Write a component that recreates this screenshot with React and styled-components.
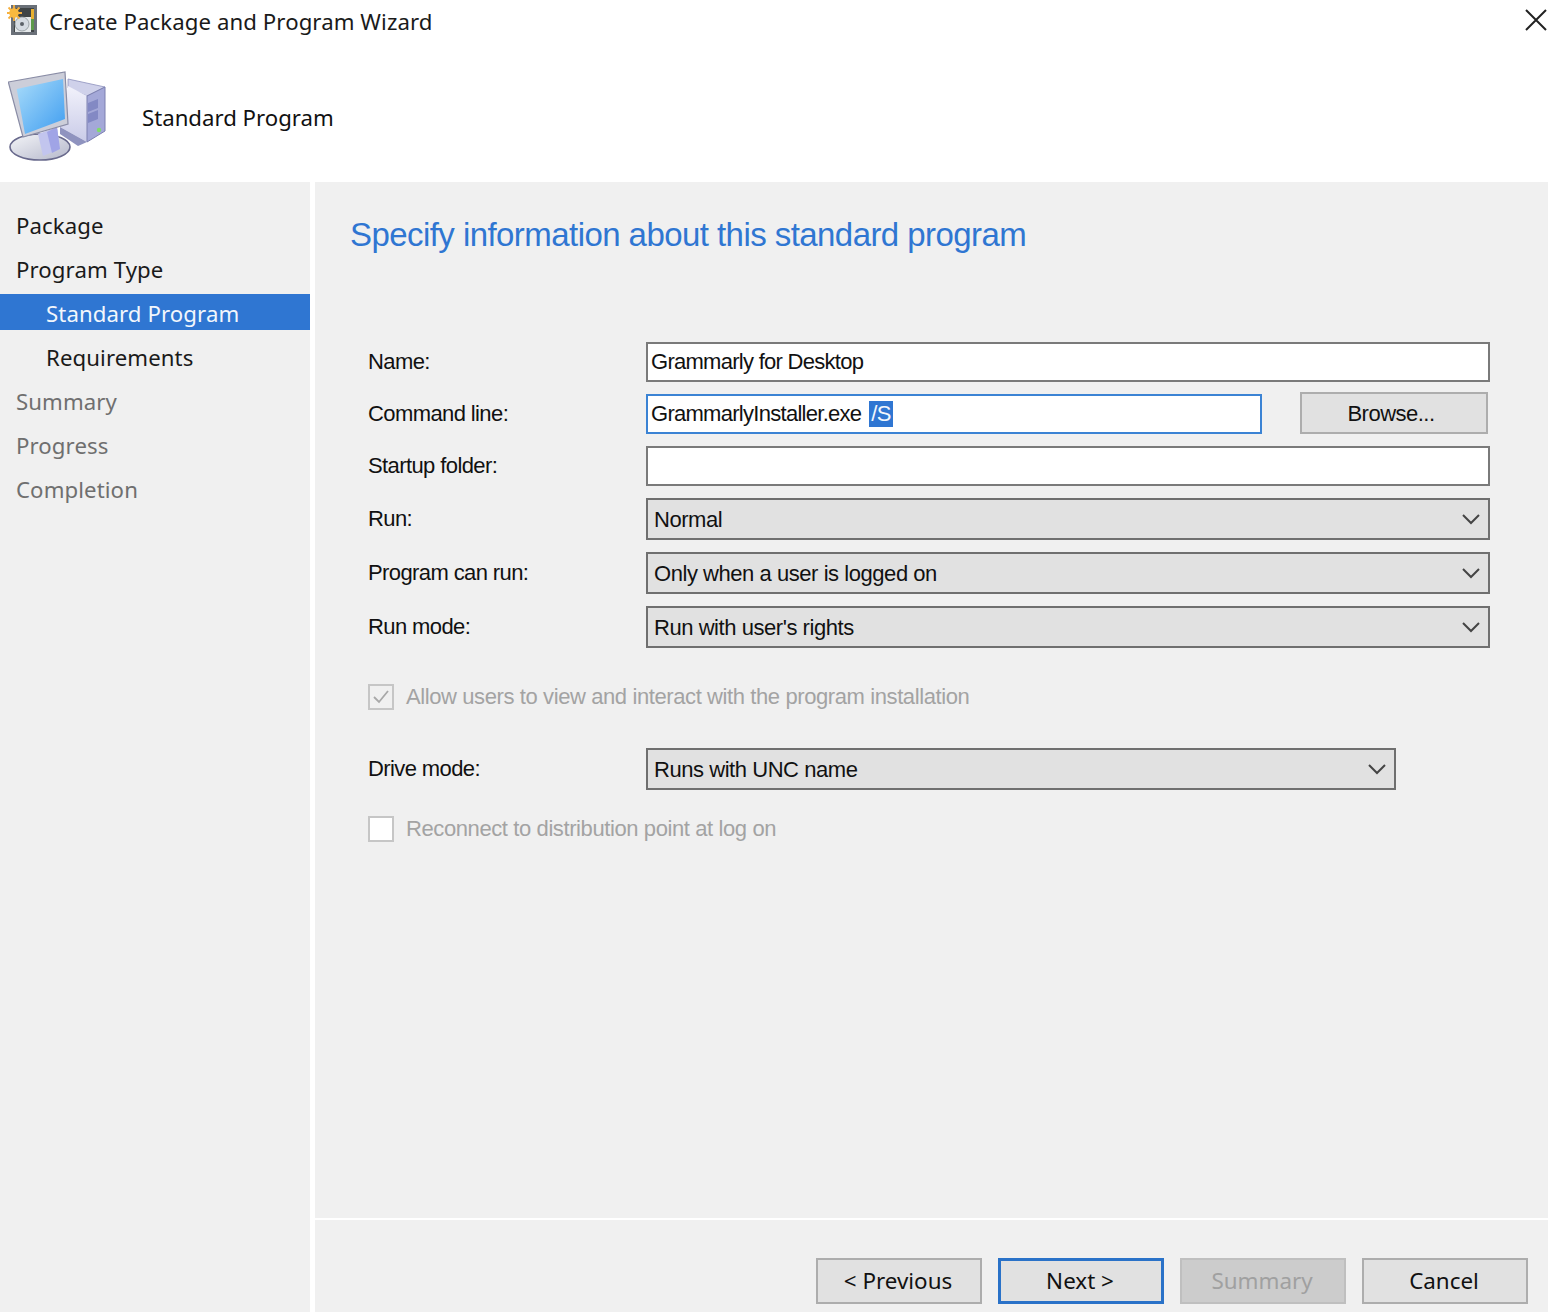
import React from "react";
import styled, { createGlobalStyle } from "styled-components";

const GlobalStyle = createGlobalStyle`
  html, body { margin: 0; padding: 0; background: #fff; }
  * { box-sizing: border-box; }
`;

const Wizard = styled.div`
  width: 1548px;
  height: 1312px;
  display: flex;
  flex-direction: column;
  background: #fff;
  overflow: hidden;
  font-family: "Noto Sans", sans-serif;
  color: #111;
`;

const TitleBar = styled.div`
  height: 44px;
  display: flex;
  align-items: center;
  padding: 0 0 0 7px;
  gap: 10px;
`;

const TitleText = styled.div`
  flex: 1;
  font-size: 22.2px;
  letter-spacing: 0.08px;
  margin-top: -1px;
  color: #1a1a1a;
`;

const Banner = styled.div`
  height: 138px;
  display: flex;
  align-items: center;
  padding: 9px 0 0 8px;
  gap: 32px;
  font-size: 22.2px;
`;

const Body = styled.div`
  flex: 1;
  display: flex;
  gap: 5px;
  min-height: 0;
`;

const Sidebar = styled.nav`
  width: 310px;
  background: #f0f0f0;
  padding-top: 24px;
  display: flex;
  flex-direction: column;
  gap: 8px;
`;

const NavItem = styled.div`
  height: 36px;
  display: flex;
  align-items: center;
  font-size: 22.2px;
  letter-spacing: 0.1px;
  padding: 2px 0 0 ${(p) => (p.$child ? "46px" : "16px")};
  background: ${(p) => (p.$active ? "#2f76d2" : "transparent")};
  color: ${(p) => (p.$active ? "#f2f6fc" : p.$muted ? "#6f6f6f" : "#1a1a1a")};
`;

const Main = styled.main`
  flex: 1;
  display: flex;
  flex-direction: column;
  background: #f0f0f0;
`;

const Content = styled.div`
  flex: 1;
  padding: 31px 58px 0 35px;
  font-family: "Liberation Sans", Arial, sans-serif;
`;

const Heading = styled.h1`
  margin: 0;
  height: 44px;
  line-height: 44px;
  font-weight: 400;
  font-size: 33px;
  letter-spacing: -0.56px;
  color: #2f76d2;
`;

const Form = styled.div`
  margin-top: 85px;
  padding-left: 18px;
  display: flex;
  flex-direction: column;
`;

const Row = styled.div`
  display: grid;
  grid-template-columns: 278px 1fr;
  align-items: center;
  margin-bottom: ${(p) => p.$gap ?? 12}px;
`;

const Label = styled.label`
  font-size: 22px;
  letter-spacing: -0.6px;
  color: #111;
`;

const FieldGroup = styled.div`
  height: 40px;
  display: flex;
  align-items: flex-end;
  justify-content: space-between;
  padding-right: 2px;
`;

const TextField = styled.div`
  height: 40px;
  width: ${(p) => p.$width || "100%"};
  display: flex;
  align-items: center;
  padding-left: 3px;
  background: #fff;
  border: 2px solid ${(p) => (p.$focused ? "#3b83d4" : "#7a7a7a")};
  font-size: 22px;
  letter-spacing: -0.72px;
  white-space: pre;
`;

const Selected = styled.span`
  background: #2f76d2;
  color: #f2f6fc;
  height: 26px;
  line-height: 26px;
  padding: 0 2px;
  margin-left: 8px;
`;

const Select = styled.div`
  height: 42px;
  width: ${(p) => p.$width || "100%"};
  display: flex;
  align-items: center;
  justify-content: space-between;
  padding: 2px 8px 0 6px;
  background: #e1e1e1;
  border: 2px solid #6f6f6f;
  font-size: 22px;
  letter-spacing: -0.45px;
`;

const Chevron = styled.svg`
  margin-top: -2px;
`;

const SelectArrow = () => (
  <Chevron width="18" height="12" viewBox="0 0 18 12">
    <path d="M1 2 L9 10 L17 2" fill="none" stroke="#444" strokeWidth="2" />
  </Chevron>
);

const CheckRow = styled.div`
  display: flex;
  align-items: center;
  gap: 12px;
  height: 26px;
  font-size: 22px;
  letter-spacing: -0.4px;
  color: #a3a3a3;
  margin-top: ${(p) => p.$top || 0}px;
  margin-bottom: ${(p) => p.$bottom || 0}px;
`;

const CheckBox = styled.span`
  width: 26px;
  height: 26px;
  display: flex;
  align-items: center;
  justify-content: center;
  border: 2px solid #c6c6c6;
  background: ${(p) => (p.$checked ? "#f0f0f0" : "#fff")};
`;

const Footer = styled.div`
  height: 94px;
  border-top: 2px solid #fff;
  display: flex;
  justify-content: flex-end;
  gap: 16px;
  padding: 38px 20px 0 0;
`;

const Button = styled.button`
  width: ${(p) => p.$width || 166}px;
  height: ${(p) => p.$height || 46}px;
  padding: ${(p) => (p.$plain ? "2px 6px 0 0" : "0 2px 2px 0")};
  background: ${(p) => (p.$disabled ? "#cccccc" : "#e1e1e1")};
  border: ${(p) => (p.$primary ? "3px solid #2a72c8" : `2px solid ${p.$disabled ? "#bfbfbf" : "#adadad"}`)};
  color: ${(p) => (p.$disabled ? "#a0a0a0" : "#111")};
  font-family: ${(p) => (p.$plain ? '"Liberation Sans", Arial' : '"Noto Sans"')}, sans-serif;
  font-size: ${(p) => (p.$plain ? 22 : 22.4)}px;
  letter-spacing: ${(p) => (p.$plain ? "-0.5px" : "0")};
`;

const SoftIcon = styled.svg`
  flex: none;
  filter: blur(0.6px);
`;

const CloseGlyph = styled.svg`
  margin-top: -4px;
`;

const CloseIcon = () => (
  <CloseGlyph width="24" height="24" viewBox="0 0 24 24">
    <path d="M2 2 L22 22 M22 2 L2 22" stroke="#222" strokeWidth="2" fill="none" />
  </CloseGlyph>
);

const WizardIcon = () => (
  <SoftIcon width="32" height="34" viewBox="0 0 32 34">
    <rect x="4" y="0" width="26" height="30" fill="#6a7078" />
    <rect x="7" y="3" width="20" height="24" fill="#3f4446" />
    <rect x="24" y="4" width="3" height="10" fill="#e8b030" />
    <rect x="24" y="14" width="3" height="11" fill="#5d9a4a" />
    <rect x="8" y="12" width="16" height="15" fill="#e4e8ea" />
    <circle cx="15" cy="19" r="7" fill="#d5dbe2" stroke="#8d9499" strokeWidth="0.8" />
    <circle cx="15" cy="19" r="2" fill="#5b6168" />
    <path d="M7 0 V16 M-1 8 H15 M1.5 2.5 L12.5 13.5 M12.5 2.5 L1.5 13.5" stroke="#f6b040" strokeWidth="1.8" />
    <circle cx="7" cy="8" r="4.8" fill="#f9b93f" />
  </SoftIcon>
);

const ComputerIcon = () => (
  <SoftIcon width="102" height="100" viewBox="0 0 102 100">
    <defs>
      <linearGradient id="screen" x1="0" y1="0" x2="1" y2="1">
        <stop offset="0" stopColor="#a9dcfa" />
        <stop offset="1" stopColor="#3f9df0" />
      </linearGradient>
      <linearGradient id="side" x1="0" y1="0" x2="0" y2="1">
        <stop offset="0" stopColor="#f2f2fb" />
        <stop offset="1" stopColor="#c9cbe8" />
      </linearGradient>
      <linearGradient id="foot" x1="0" y1="0" x2="1" y2="1">
        <stop offset="0" stopColor="#f4f5f8" />
        <stop offset="1" stopColor="#b4b7ca" />
      </linearGradient>
    </defs>
    <path d="M60 11 L97 19 L79 28 L60 20 Z" fill="#cfd1ea" stroke="#8d91bd" strokeWidth="0.8" />
    <path d="M60 18 L79 28 L79 74 L52 59 Z" fill="url(#side)" />
    <path d="M79 28 L97 19 L97 63 L79 74 Z" fill="#a4a8d8" stroke="#7c80b0" strokeWidth="1" />
    <path d="M70 78 L52 66 L52 59 L79 74 Z" fill="#8f93bf" />
    <path d="M80 35 L90 31 V40 L80 44 Z" fill="#8389c4" />
    <path d="M80 46 L90 42 V51 L80 55 Z" fill="#8389c4" />
    <circle cx="91" cy="62" r="2.2" fill="#7fdc6a" />
    <ellipse cx="32" cy="79" rx="30" ry="13" fill="url(#foot)" stroke="#68698c" strokeWidth="1.6" />
    <path d="M30 66 L49 59 L52 81 L35 88 Z" fill="#c2c5ee" />
    <path d="M39 64 L49 59 L52 81 L44 85 Z" fill="#a0a4e6" />
    <path d="M0.3 14 L57 4 L60 56 L15 69 Z" fill="#ccced9" stroke="#8a8da6" strokeWidth="1.2" />
    <path d="M8.7 21 L55 11 L57 51 L17 66 Z" fill="url(#screen)" />
  </SoftIcon>
);

const navItems = [
  { label: "Package" },
  { label: "Program Type" },
  { label: "Standard Program", child: true, active: true },
  { label: "Requirements", child: true },
  { label: "Summary", muted: true },
  { label: "Progress", muted: true },
  { label: "Completion", muted: true },
];

export default function App() {
  return (
    <Wizard>
      <GlobalStyle />
      <TitleBar>
        <WizardIcon />
        <TitleText>Create Package and Program Wizard</TitleText>
        <CloseIcon />
      </TitleBar>
      <Banner>
        <ComputerIcon />
        <span>Standard Program</span>
      </Banner>
      <Body>
        <Sidebar>
          {navItems.map((item) => (
            <NavItem key={item.label} $child={item.child} $active={item.active} $muted={item.muted}>
              {item.label}
            </NavItem>
          ))}
        </Sidebar>
        <Main>
          <Content>
            <Heading>Specify information about this standard program</Heading>
            <Form>
              <Row>
                <Label>Name:</Label>
                <TextField>Grammarly for Desktop</TextField>
              </Row>
              <Row>
                <Label>Command line:</Label>
                <FieldGroup>
                  <TextField $focused $width="616px">
                    GrammarlyInstaller.exe<Selected>/S</Selected>
                  </TextField>
                  <Button $plain $width={188} $height={42}>Browse...</Button>
                </FieldGroup>
              </Row>
              <Row>
                <Label>Startup folder:</Label>
                <TextField />
              </Row>
              <Row>
                <Label>Run:</Label>
                <Select>Normal<SelectArrow /></Select>
              </Row>
              <Row>
                <Label>Program can run:</Label>
                <Select>Only when a user is logged on<SelectArrow /></Select>
              </Row>
              <Row $gap={0}>
                <Label>Run mode:</Label>
                <Select>Run with user's rights<SelectArrow /></Select>
              </Row>
              <CheckRow $top={36} $bottom={38}>
                <CheckBox $checked>
                  <svg width="18" height="16" viewBox="0 0 18 16">
                    <path d="M2 8 L7 13 L16 2" fill="none" stroke="#a8a8a8" strokeWidth="1.8" />
                  </svg>
                </CheckBox>
                Allow users to view and interact with the program installation
              </CheckRow>
              <Row $gap={0}>
                <Label>Drive mode:</Label>
                <Select $width="750px">Runs with UNC name<SelectArrow /></Select>
              </Row>
              <CheckRow $top={26}>
                <CheckBox />
                Reconnect to distribution point at log on
              </CheckRow>
            </Form>
          </Content>
          <Footer>
            <Button>&lt; Previous</Button>
            <Button $primary>Next &gt;</Button>
            <Button $disabled>Summary</Button>
            <Button>Cancel</Button>
          </Footer>
        </Main>
      </Body>
    </Wizard>
  );
}
